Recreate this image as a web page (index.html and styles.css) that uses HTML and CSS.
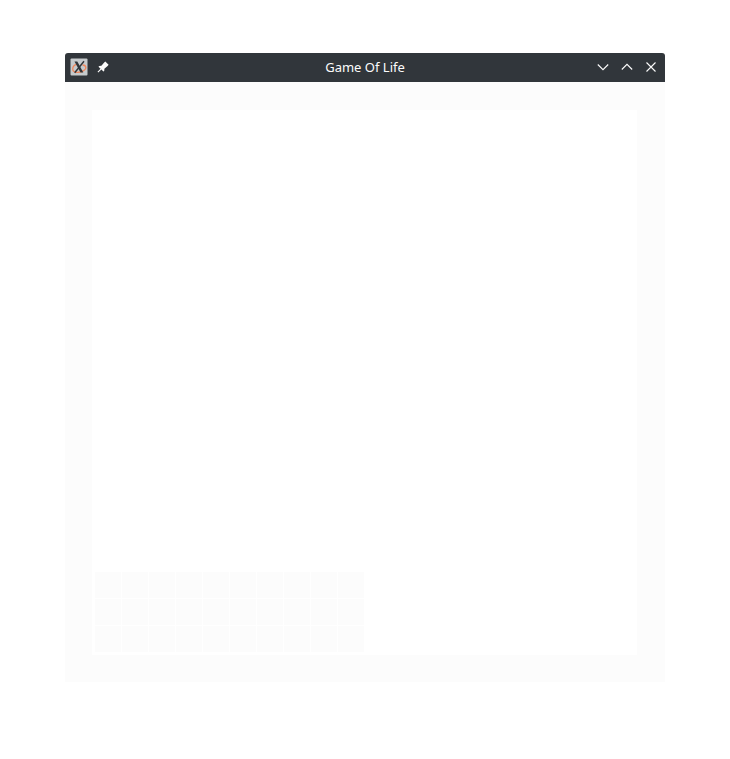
FILE: index.html
```html
<!DOCTYPE html>
<html lang="en">
<head>
<meta charset="utf-8">
<title>Game Of Life</title>
<link rel="stylesheet" href="styles.css">
</head>
<body>
<main class="window">
  <header class="titlebar">
    <div class="side">
      <svg class="app" width="18" height="18" viewBox="0 0 18 18">
        <rect x=".5" y=".5" width="17" height="17" rx="1" fill="#c6cacc"/>
        <path d="M7 6.200C1.500 8 1.500 13.500 6 14.300c5.500.6 10.500-2.500 9.800-5.300-.3-1.300-1.800-2-3.300-2" fill="none" stroke="#f0875c" stroke-width="1.300"/>
        <path d="M4.500 3.500h2.800l6 11h-2.800z" fill="#303539"/>
        <path d="M14 3.200L4.700 14.800" stroke="#303539" stroke-width="1.400"/>
      </svg>
      <svg class="pin" width="12" height="12" viewBox="0 0 12 12">
        <path d="M8.300 .5l3.300 3.300-1 1.200-3.200 2.800-.2 2.200-.8.600-2-2L1.300 11.500l-.8-.8L3.500 7.700l-2-2 .7-.8 2.200-.2 2.800-3.200z" fill="#fcfcfc"/>
      </svg>
    </div>
    <h1>Game Of Life</h1>
    <div class="side controls">
      <svg width="12" height="12" viewBox="0 0 12 12"><path d="M.8 3.500L6 8.700l5.200-5.200"/></svg>
      <svg width="12" height="12" viewBox="0 0 12 12"><path d="M.8 8.500L6 3.300l5.200 5.200"/></svg>
      <svg width="12" height="12" viewBox="0 0 12 12"><path d="M1.500 1.500l9 9m0-9l-9 9"/></svg>
    </div>
  </header>
  <section class="content">
    <div class="board">
      <div class="cells">
        <i></i><i></i><i></i><i></i><i></i><i></i><i></i><i></i><i></i><i></i>
        <i></i><i></i><i></i><i></i><i></i><i></i><i></i><i></i><i></i><i></i>
        <i></i><i></i><i></i><i></i><i></i><i></i><i></i><i></i><i></i><i></i>
      </div>
    </div>
  </section>
</main>
</body>
</html>
```
FILE: styles.css
```css
* { box-sizing: border-box; }
body { margin: 0; padding: 53px 65px; background: #fff; font-family: "Noto Sans", sans-serif; }
.window { width: 600px; height: 629px; }
.titlebar {
  display: flex;
  align-items: center;
  height: 29px;
  padding: 0 8px 1px 5px;
  border-radius: 3px 3px 0 0;
  background: #31363b;
}
.side { display: flex; align-items: center; width: 100px; }
.pin { margin-left: 9px; }
.controls { justify-content: flex-end; gap: 12px; }
.controls path { fill: none; stroke: #fcfcfc; stroke-width: 1.1; }
h1 {
  flex: 1;
  margin: 0;
  padding-left: 3px;
  text-align: center;
  font-size: 13px;
  font-weight: 400;
  line-height: 28px;
  color: #fcfcfc;
}
.content { height: 600px; padding: 28px 28px 27px 27px; background: #fcfcfc; }
.board { display: flex; align-items: flex-end; height: 545px; padding: 3px; background: #fff; }
.cells { display: grid; grid-template-columns: repeat(10, 26px); grid-auto-rows: 26px; gap: 1px; }
.cells i { background: #fcfcfc; }
```
